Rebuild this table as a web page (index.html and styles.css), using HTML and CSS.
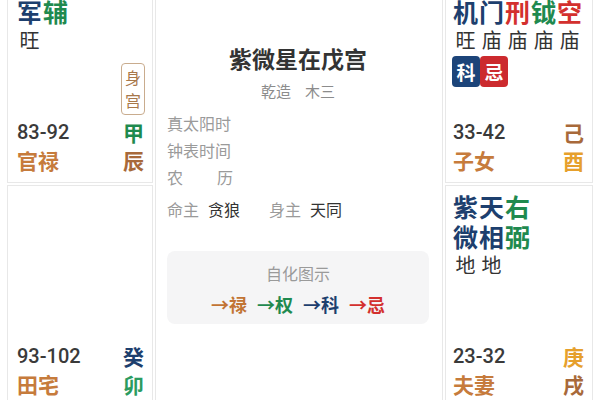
FILE: index.html
```html
<!DOCTYPE html>
<html lang="zh">
<head>
<meta charset="utf-8">
<link rel="stylesheet" href="styles.css">
</head>
<body>
<div class="chart">
  <div class="cell c-tl top">
    <div class="stars">
      <div class="star"><span class="sc blue">军</span><span class="br">旺</span></div>
      <div class="star"><span class="sc green">辅</span><span class="br"></span></div>
    </div>
    <div class="spacer"></div>
    <div class="body-badge"><span>身</span><span>宫</span></div>
    <div class="foot">
      <div class="frow"><span class="age">83-92</span><span class="stem green">甲</span></div>
      <div class="frow"><span class="pal">官禄</span><span class="stem brown">辰</span></div>
    </div>
  </div>

  <div class="center">
    <div class="title">紫微星在戊宫</div>
    <div class="sub">乾造<span class="sp"></span>木三</div>
    <div class="info">
      <div class="irow">真太阳时</div>
      <div class="irow">钟表时间</div>
      <div class="irow just"><span>农</span><span>历</span></div>
      <div class="irow master"><span class="lbl">命主</span><span class="val">贪狼</span><span class="lbl l2">身主</span><span class="val">天同</span></div>
    </div>
    <div class="legend">
      <div class="ltitle">自化图示</div>
      <div class="arrows">
        <span class="brown2">→禄</span>
        <span class="green">→权</span>
        <span class="blue">→科</span>
        <span class="red">→忌</span>
      </div>
    </div>
  </div>

  <div class="cell c-tr top">
    <div class="stars">
      <div class="star"><span class="sc blue">机</span><span class="br">旺</span></div>
      <div class="star"><span class="sc blue">门</span><span class="br">庙</span></div>
      <div class="star"><span class="sc red">刑</span><span class="br">庙</span></div>
      <div class="star"><span class="sc green">钺</span><span class="br">庙</span></div>
      <div class="star"><span class="sc red">空</span><span class="br">庙</span></div>
    </div>
    <div class="tags"><span class="tag tag-ke">科</span><span class="tag tag-ji">忌</span></div>
    <div class="spacer"></div>
    <div class="foot">
      <div class="frow"><span class="age">33-42</span><span class="stem brown">己</span></div>
      <div class="frow"><span class="pal">子女</span><span class="stem orange">酉</span></div>
    </div>
  </div>

  <div class="cell c-bl">
    <div class="spacer"></div>
    <div class="foot">
      <div class="frow"><span class="age">93-102</span><span class="stem blue">癸</span></div>
      <div class="frow"><span class="pal">田宅</span><span class="stem green2">卯</span></div>
    </div>
  </div>

  <div class="cell c-br">
    <div class="stars">
      <div class="star"><span class="sc blue">紫</span><span class="sc blue">微</span><span class="br">地</span></div>
      <div class="star"><span class="sc blue">天</span><span class="sc blue">相</span><span class="br">地</span></div>
      <div class="star"><span class="sc green">右</span><span class="sc green">弼</span><span class="br"></span></div>
    </div>
    <div class="spacer"></div>
    <div class="foot">
      <div class="frow"><span class="age">23-32</span><span class="stem orange">庚</span></div>
      <div class="frow"><span class="pal">夫妻</span><span class="stem brown">戌</span></div>
    </div>
  </div>
</div>
</body>
</html>
```

FILE: styles.css
```css
* { box-sizing: border-box; }
html, body {
  margin: 0;
  padding: 0;
  background: #ffffff;
  overflow: hidden;
}
body {
  width: 600px;
  height: 400px;
  font-family: "Noto Sans CJK SC", "Noto Sans", sans-serif;
  color: #333;
}
.chart {
  display: grid;
  grid-template-columns: 146px 288px 148px;
  grid-template-rows: 222px 222px;
  column-gap: 2px;
  row-gap: 2px;
  margin-top: -39px;
  padding-left: 7px;
}
.cell {
  border: 1px solid #e8e8e8;
  background: #fff;
  display: flex;
  flex-direction: column;
  padding: 5px 8px 8px 9px;
}
.cell.top { padding-top: 34px; }
.c-tl { grid-column: 1; grid-row: 1; }
.c-bl { grid-column: 1; grid-row: 2; }
.c-tr { grid-column: 3; grid-row: 1; padding-left: 7px; }
.c-br { grid-column: 3; grid-row: 2; padding-left: 7px; }
.center {
  grid-column: 2;
  grid-row: 1 / span 2;
  border: 1px solid #e8e8e8;
  padding: 81px 13px 0 11px;
  display: flex;
  flex-direction: column;
}
.spacer { flex: 1; }

.stars { display: flex; gap: 1px; }
.star { display: flex; flex-direction: column; align-items: center; width: 25px; }
.sc {
  font-size: 25px;
  font-weight: 700;
  line-height: 30px;
}
.br {
  font-size: 20px;
  line-height: 22px;
  height: 22px;
  margin-top: 3px;
  color: #333;
}

.blue { color: #1d3f6e; }
.green { color: #1f8a4f; }
.green2 { color: #2b9b60; }
.red { color: #d3302e; }
.brown { color: #a8693a; }
.brown2 { color: #c27434; }
.orange { color: #e6a02c; }

.tags { display: flex; margin-top: 5px; margin-left: -1px; }
.tag {
  width: 28px;
  height: 31px;
  display: flex;
  align-items: center;
  justify-content: center;
  color: #fff;
  font-size: 19px;
  font-weight: 700;
  border-radius: 4px;
}
.tag-ke { background: #1c4479; }
.tag-ji { background: #cc2a2e; }

.body-badge {
  align-self: flex-end;
  width: 24px;
  height: 52px;
  border: 1px solid #c9ac8e;
  border-radius: 4px;
  display: flex;
  flex-direction: column;
  align-items: center;
  justify-content: center;
  font-size: 16px;
  line-height: 23px;
  color: #a8784a;
  margin-bottom: 3px;
  margin-right: -1px;
}

.foot { display: flex; flex-direction: column; }
.frow {
  display: flex;
  justify-content: space-between;
  align-items: center;
  height: 28px;
}
.age {
  font-family: "Roboto", "Noto Sans CJK SC", sans-serif;
  font-size: 20px;
  font-weight: 500;
  color: #3a3a3a;
}
.pal {
  font-size: 21px;
  font-weight: 700;
  color: #c67b3c;
}
.stem {
  font-size: 21px;
  font-weight: 700;
}

.title {
  text-align: center;
  font-size: 23px;
  font-weight: 700;
  line-height: 30px;
  color: #333;
}
.sub {
  text-align: center;
  font-size: 15px;
  line-height: 22px;
  color: #8c8c8c;
  margin-top: 7px;
}
.sp { display: inline-block; width: 14px; }
.info { margin-top: 8px; }
.irow {
  font-size: 16px;
  line-height: 27px;
  color: #9a9a9a;
}
.just { display: flex; justify-content: space-between; width: 66px; }
.master { margin-top: 5px; display: flex; }
.lbl { color: #9a9a9a; }
.val { color: #333; margin-left: 9px; }
.l2 { margin-left: 29px; }

.legend {
  margin-top: 28px;
  background: #f5f5f6;
  border-radius: 8px;
  padding: 11px 0 7px;
  display: flex;
  flex-direction: column;
  align-items: center;
}
.ltitle {
  font-size: 16px;
  line-height: 22px;
  color: #9a9a9a;
}
.arrows {
  display: flex;
  gap: 10px;
  margin-top: 7px;
  font-size: 18px;
  line-height: 26px;
  font-weight: 700;
}
```
